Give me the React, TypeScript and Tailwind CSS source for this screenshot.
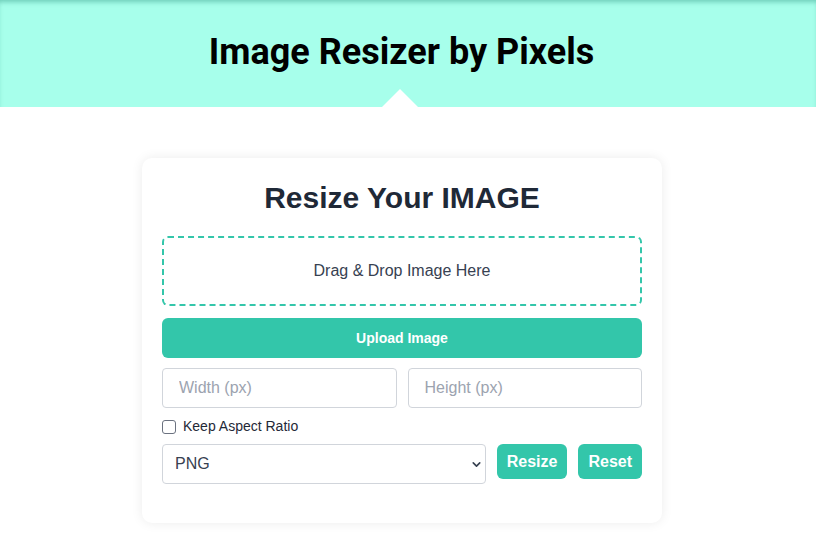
import { ChevronDown } from 'lucide-react';

export default function App() {
  return (
    <div className="min-h-[540px] bg-white font-['Liberation_Sans',Arial,sans-serif]">
      <header className="relative h-[107px] bg-[#a7ffeb] shadow-[inset_0_4px_5px_-2px_rgba(0,110,90,0.35)] flex items-center justify-center pr-[13px]">
        <h1 className="font-['Roboto',sans-serif] font-bold text-[36px] text-black leading-none -mt-[3px]">
          Image Resizer by Pixels
        </h1>
        <div className="absolute bottom-0 left-[382px] w-0 h-0 border-l-[18px] border-r-[18px] border-b-[18px] border-l-transparent border-r-transparent border-b-white" />
      </header>

      <main className="flex justify-center pt-[51px] pr-[12px]">
        <div className="w-[520px] bg-white rounded-[10px] shadow-[0_0_12px_rgba(0,0,0,0.08)] px-5 pt-[22px] pb-[39px]">
          <h2 className="text-center text-[30px] font-bold text-[#1f2937] leading-[36px]">
            Resize Your IMAGE
          </h2>

          <div className="mt-[20px] h-[70px] border-2 border-dashed border-[#34c6aa] rounded-md flex items-center justify-center text-[16px] text-[#374151]">
            Drag &amp; Drop Image Here
          </div>

          <button className="mt-3 w-full h-10 rounded-md bg-[#33c6aa] text-white font-bold text-[14px]">
            Upload Image
          </button>

          <div className="mt-[10px] flex gap-[11px]">
            <input
              placeholder="Width (px)"
              className="flex-1 min-w-0 h-10 px-4 border border-[#d1d5db] rounded text-[16px] placeholder:text-[#9ca3af] outline-none"
            />
            <input
              placeholder="Height (px)"
              className="flex-1 min-w-0 h-10 px-4 border border-[#d1d5db] rounded text-[16px] placeholder:text-[#9ca3af] outline-none"
            />
          </div>

          <label className="mt-[8px] flex items-center gap-[7px] text-[14px] text-[#1f2937]">
            <span className="w-[14px] h-[14px] border border-[#6b7280] rounded-[3px] bg-white" />
            Keep Aspect Ratio
          </label>

          <div className="mt-[7px] flex items-start gap-[11px]">
            <div className="relative w-[325px] h-10 border border-[#d1d5db] rounded flex items-center px-3 text-[16px] text-[#374151]">
              PNG
              <ChevronDown size={13} strokeWidth={3} className="absolute right-[2px] text-[#374151]" />
            </div>
            <button className="h-[35px] px-[10px] rounded-md bg-[#33c6aa] text-white font-bold text-[16px]">
              Resize
            </button>
            <button className="h-[35px] px-[10px] rounded-md bg-[#33c6aa] text-white font-bold text-[16px]">
              Reset
            </button>
          </div>
        </div>
      </main>
    </div>
  );
}
